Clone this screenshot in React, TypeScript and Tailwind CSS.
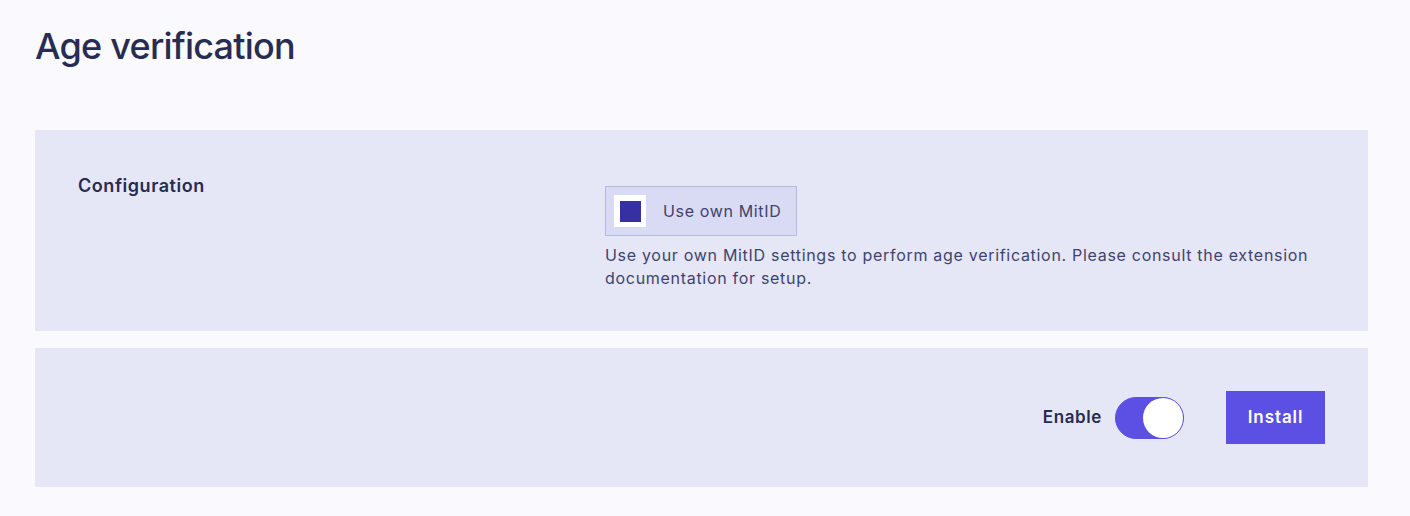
import React, { useState } from "react";

export default function App() {
  const [checked] = useState(true);
  const [enabled, setEnabled] = useState(true);
  return (
    <div
      className="min-h-[516px] w-full bg-[#f9f9fe] px-[35px] pt-[22px] pb-[29px] text-[#262b50]"
      style={{ fontFamily: "Inter, 'Noto Sans', sans-serif" }}
    >
      <h1 className="text-[36px] leading-[48px] font-medium tracking-[-0.75px] text-[#272c52]">
        Age verification
      </h1>
      <div className="mt-[60px] flex flex-col gap-[17px] w-[1333px]">
        <section className="flex bg-[#e5e7f6] pl-[43px] pr-[43px] pt-[43px] pb-[40px] h-[201px]">
          <div className="w-[527px] shrink-0 pt-[1px] text-[18px] font-semibold tracking-[0.55px] text-[#272c52] leading-[24px]">
            Configuration
          </div>
          <div className="flex flex-col pt-[13px] min-w-0">
            <label className="flex items-center self-start h-[50px] border border-[#b8b9e2] bg-[#d9daf4] pl-[8px] pr-[15px] cursor-pointer">
              <span className="flex items-center justify-center w-[32px] h-[32px] bg-white">
                {checked && <span className="block w-[21px] h-[21px] bg-[#3730a3]" />}
              </span>
              <span className="ml-[17px] text-[16px] tracking-[0.65px] text-[#3e4370]">Use own MitID</span>
            </label>
            <p className="mt-[8px] w-[720px] text-[16px] leading-[23px] tracking-[0.7px] text-[#3e4370]">
              Use your own MitID settings to perform age verification. Please consult the extension documentation for setup.
            </p>
          </div>
        </section>
        <section className="flex items-center justify-end bg-[#e5e7f6] h-[139px] pr-[43px]">
          <span className="text-[17px] font-semibold tracking-[0.6px] text-[#272c52]">Enable</span>
          <button
            onClick={() => setEnabled(!enabled)}
            className="ml-[13px] relative w-[69px] h-[42px] rounded-full bg-[#5b50e3] border border-[#5b50e3]"
          >
            <span
              className={
                enabled
                  ? "absolute right-0 top-0 w-[40px] h-[40px] rounded-full bg-white"
                  : "absolute left-0 top-0 w-[40px] h-[40px] rounded-full bg-white"
              }
            />
          </button>
          <button className="ml-[42px] w-[99px] h-[53px] bg-[#5b50e3] text-white text-[17px] font-semibold tracking-[0.9px]">
            Install
          </button>
        </section>
      </div>
    </div>
  );
}
